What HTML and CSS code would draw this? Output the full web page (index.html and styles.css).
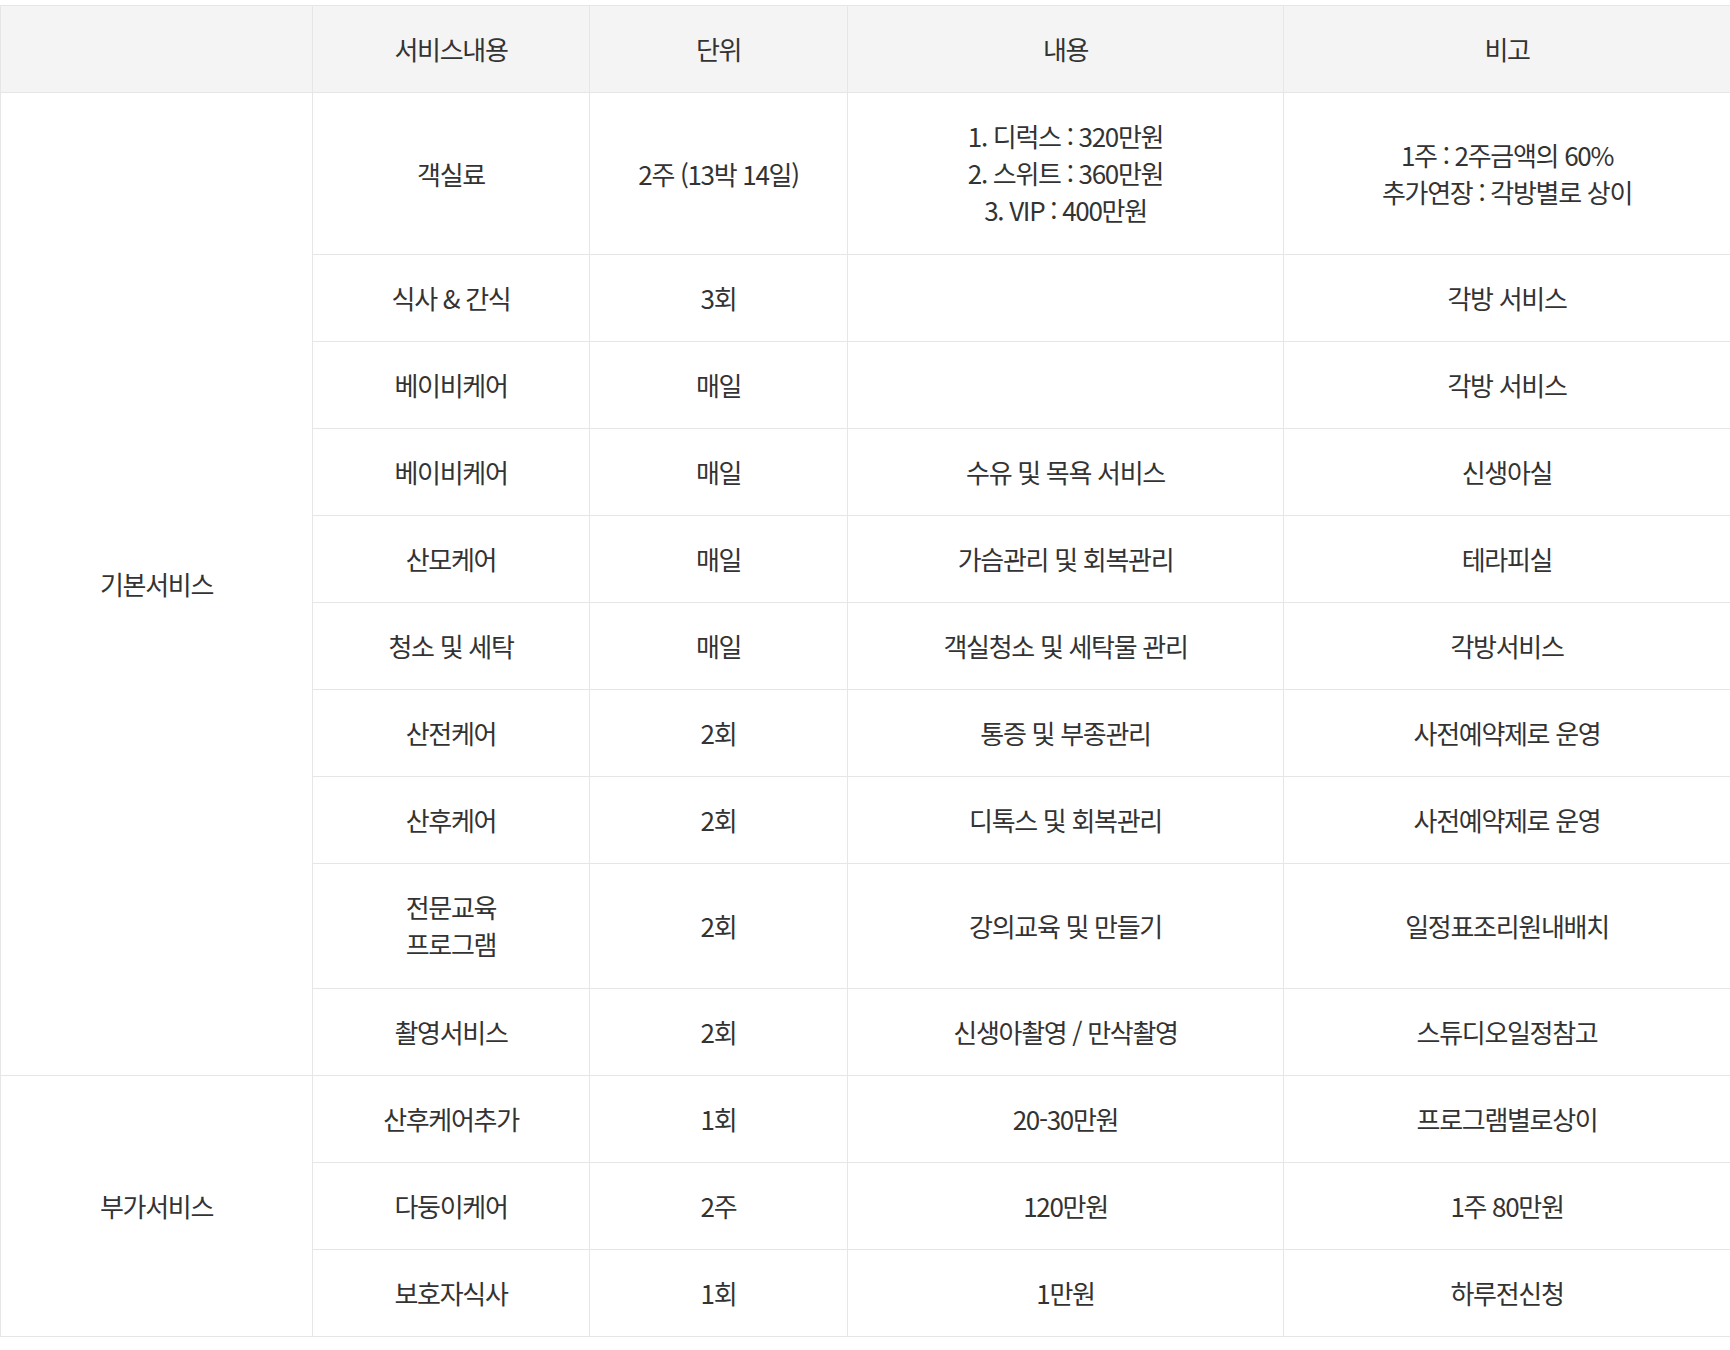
FILE: index.html
```html
<!DOCTYPE html>
<html lang="ko">
<head>
<meta charset="utf-8">
<title>서비스 안내</title>
<link rel="stylesheet" href="styles.css">
</head>
<body>
<div class="wrap">
<table class="svc">
  <colgroup>
    <col class="c1"><col class="c2"><col class="c3"><col class="c4"><col class="c5">
  </colgroup>
  <thead>
    <tr><th></th><th>서비스내용</th><th>단위</th><th>내용</th><th>비고</th></tr>
  </thead>
  <tbody>
    <tr><td rowspan="10">기본서비스</td><td>객실료</td><td>2주 (13박 14일)</td><td class="multi">1. 디럭스 : 320만원<br>2. 스위트 : 360만원<br>3. VIP : 400만원</td><td>1주 : 2주금액의 60%<br>추가연장 : 각방별로 상이</td></tr>
    <tr><td>식사 &amp; 간식</td><td>3회</td><td></td><td>각방 서비스</td></tr>
    <tr><td>베이비케어</td><td>매일</td><td></td><td>각방 서비스</td></tr>
    <tr><td>베이비케어</td><td>매일</td><td>수유 및 목욕 서비스</td><td>신생아실</td></tr>
    <tr><td>산모케어</td><td>매일</td><td>가슴관리 및 회복관리</td><td>테라피실</td></tr>
    <tr><td>청소 및 세탁</td><td>매일</td><td>객실청소 및 세탁물 관리</td><td>각방서비스</td></tr>
    <tr><td>산전케어</td><td>2회</td><td>통증 및 부종관리</td><td>사전예약제로 운영</td></tr>
    <tr><td>산후케어</td><td>2회</td><td>디톡스 및 회복관리</td><td>사전예약제로 운영</td></tr>
    <tr><td class="multi">전문교육<br>프로그램</td><td>2회</td><td>강의교육 및 만들기</td><td>일정표조리원내배치</td></tr>
    <tr><td>촬영서비스</td><td>2회</td><td>신생아촬영 / 만삭촬영</td><td>스튜디오일정참고</td></tr>
    <tr><td rowspan="3">부가서비스</td><td>산후케어추가</td><td>1회</td><td>20-30만원</td><td>프로그램별로상이</td></tr>
    <tr><td>다둥이케어</td><td>2주</td><td>120만원</td><td>1주 80만원</td></tr>
    <tr><td>보호자식사</td><td>1회</td><td>1만원</td><td>하루전신청</td></tr>
  </tbody>
</table>
</div>
</body>
</html>
```
FILE: styles.css
```css
html, body {
  margin: 0;
  padding: 0;
  background: #fff;
}
.wrap {
  padding-top: 5px;
}
.svc {
  width: 1730px;
  border-collapse: collapse;
  table-layout: fixed;
  font-family: "Noto Sans CJK KR", "Noto Sans", sans-serif;
  font-size: 26px;
  line-height: 37px;
  letter-spacing: -1.3px;
  color: #333;
}
.c1 { width: 312px; }
.c2 { width: 277px; }
.c3 { width: 258px; }
.c4 { width: 436px; }
.c5 { width: 447px; }
.svc th,
.svc td {
  border: 1px solid #e6e6e6;
  padding: 24px 10px 25px;
  text-align: center;
  vertical-align: middle;
  font-weight: 400;
}
.svc td.multi {
  padding-bottom: 26px;
}
.svc thead th {
  background: #f4f4f4;
}
```
